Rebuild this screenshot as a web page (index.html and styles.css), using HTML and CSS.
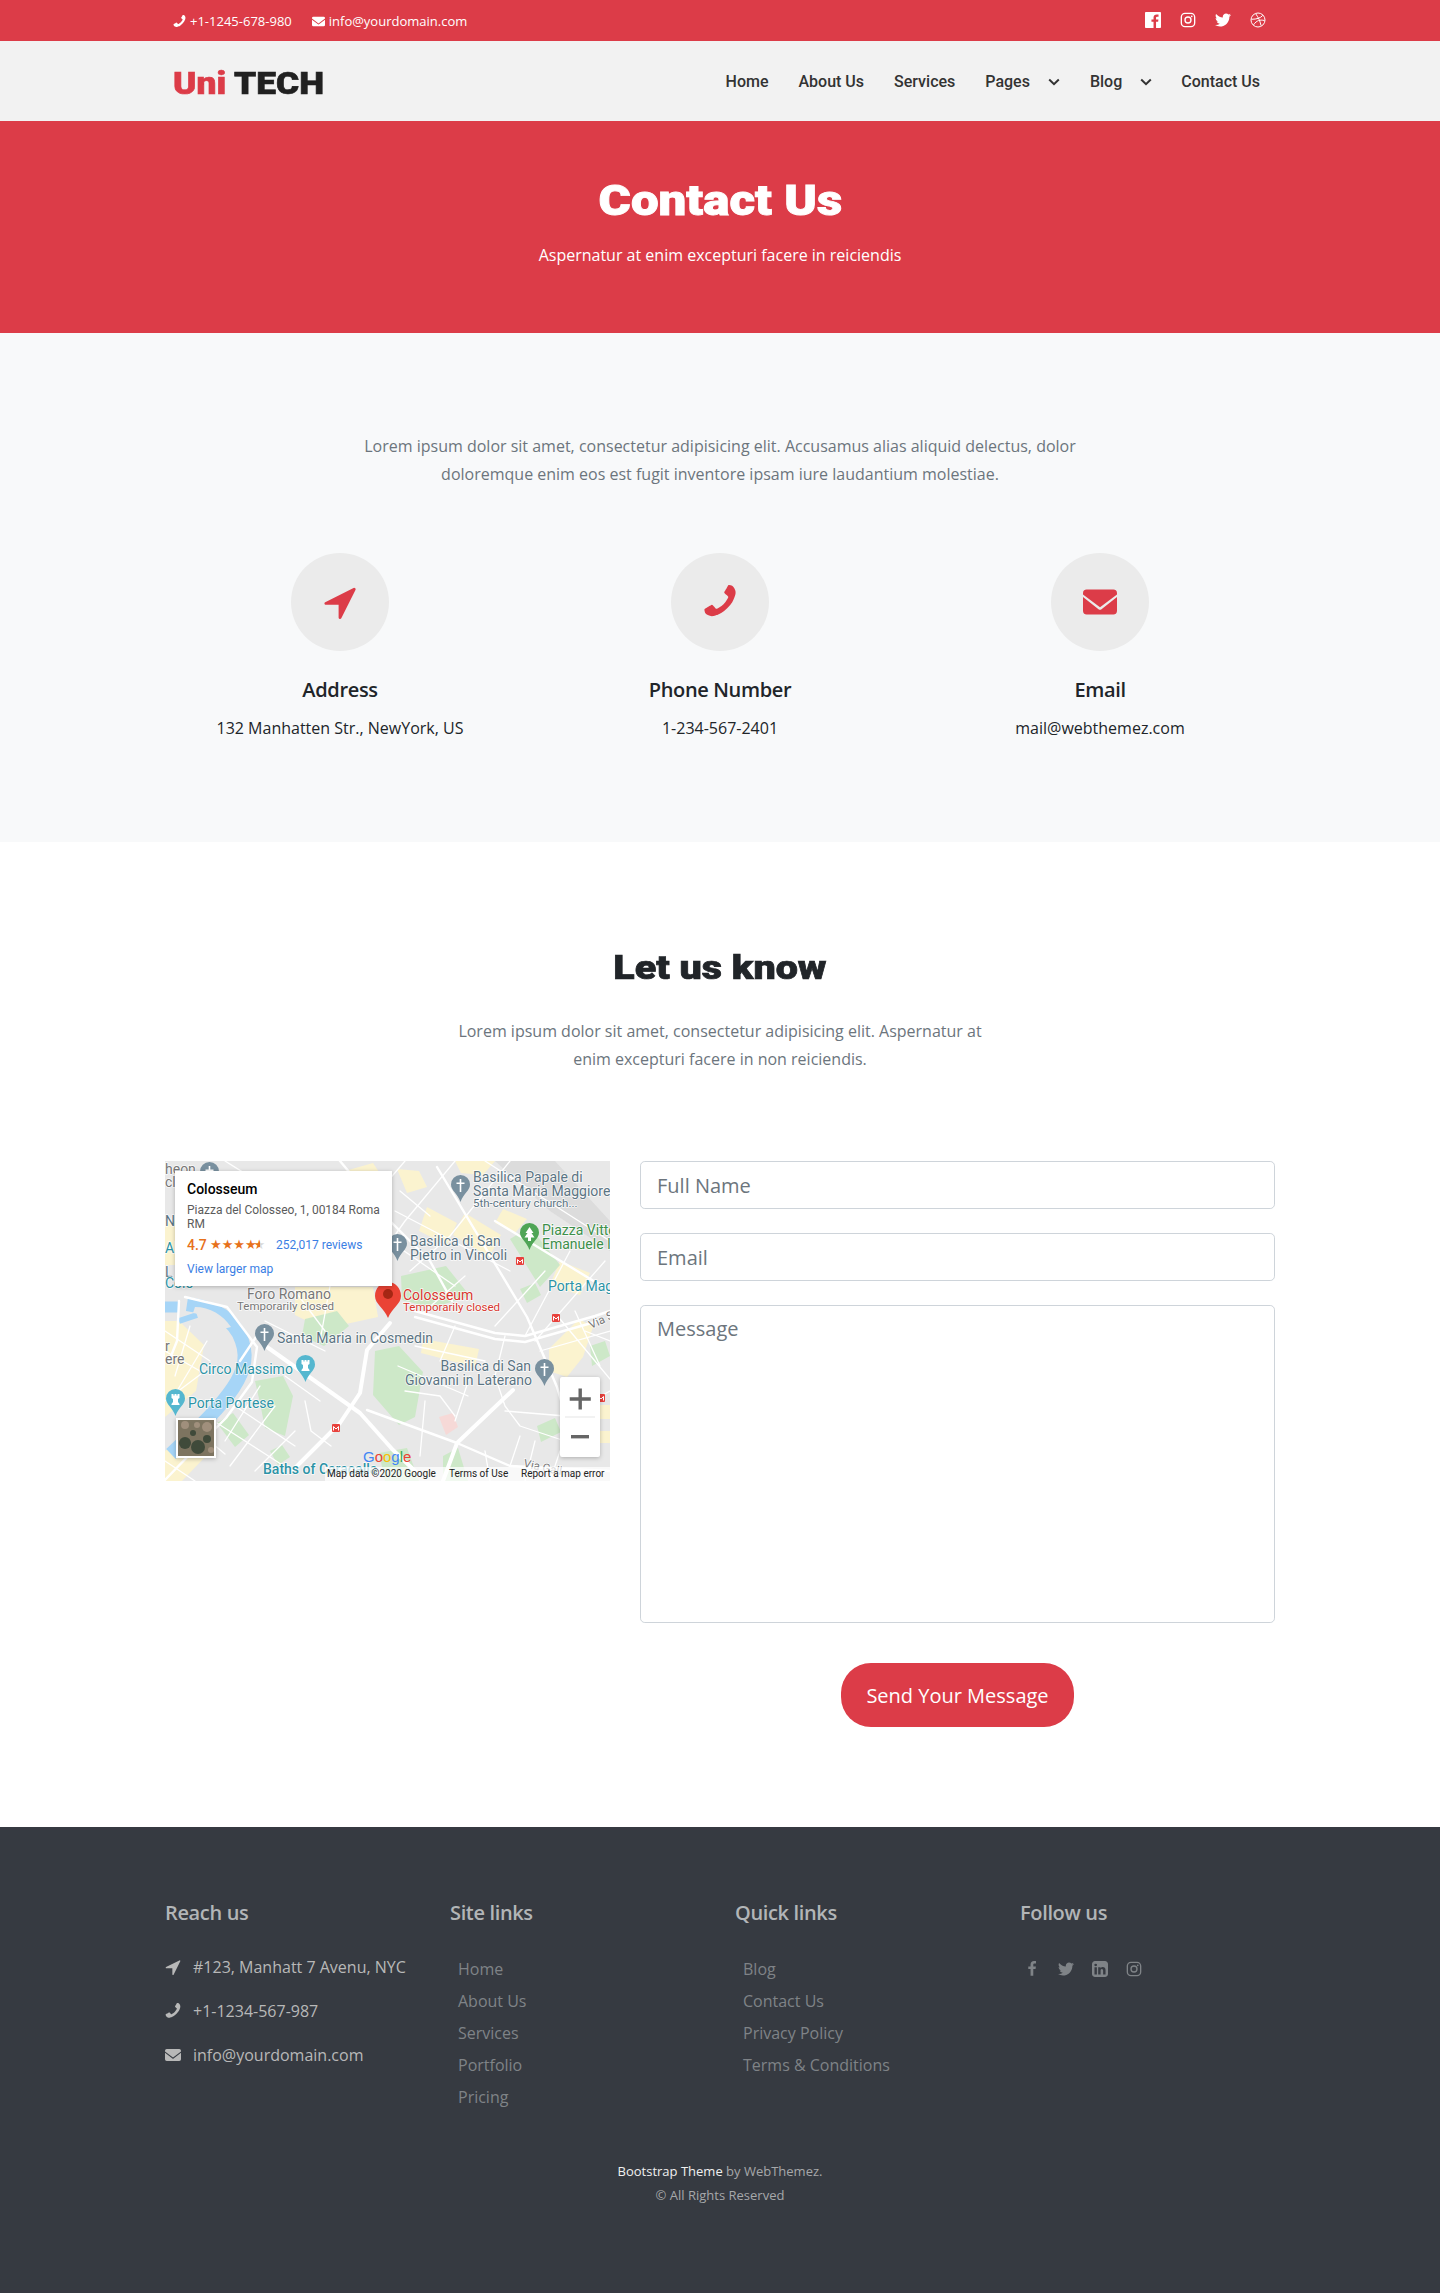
FILE: index.html
```html
<!DOCTYPE html>
<html lang="en">
<head>
<meta charset="utf-8">
<title>Contact Us - UniTech</title>
<link rel="stylesheet" href="styles.css">
</head>
<body>
<svg class="defs" width="0" height="0" aria-hidden="true">
  <defs>
    <symbol id="i-arrow" viewBox="190 128 1410 1536"><path d="M1593 349l-640 1280q-17 35-57 35-5 0-15-2-22-5-35.5-22.5t-13.5-39.5v-576h-576q-22 0-39.5-13.5t-22.5-35.5 4-42 29-30l1280-640q13-7 29-7 27 0 45 19 15 14 18.5 34.5t-6.5 39.5z"/></symbol>
    <symbol id="i-phone" viewBox="192 128 1408 1536"><g transform="matrix(-1 0 0 1 1792 0)"><path d="M1600 1240q0 27-10 70.5t-21 68.5q-21 50-122 106-94 51-186 51-27 0-53-3.5t-57.5-12.5-47-14.5-55.5-20.5-49-18q-98-35-175-83-127-79-264-216t-216-264q-48-77-83-175-3-9-18-49t-20.5-55.5-14.5-47-12.5-57.5-3.5-53q0-92 51-186 56-101 106-122 25-11 68.5-21t70.5-10q14 0 21 3 18 6 53 76 11 19 30 54t35 63.5 31 53.5q3 4 17.5 25t21.5 35.5 7 28.5q0 20-28.5 50t-62 55-62 53-28.5 46q0 9 5 22.5t8.5 20.5 14 24 11.5 19q76 137 174 235t235 174q2 1 19 11.5t24 14 20.5 8.5 22.5 5q18 0 46-28.5t53-62 55-62 50-28.5q14 0 28.5 7t35.5 21.5 25 17.5q25 15 53.5 31t63.5 35 54 30q70 35 76 53 3 7 3 21z"/></g></symbol>
    <symbol id="i-mail" viewBox="0.5 3.5 23 17"><path fill-rule="evenodd" d="M3 3.5h18a2.5 2.5 0 0 1 2.5 2.5v.9L12 15.6.5 6.9V6A2.5 2.5 0 0 1 3 3.5zM.5 8.7 11.2 17a1.3 1.3 0 0 0 1.6 0L23.5 8.7V18a2.5 2.5 0 0 1-2.5 2.5H3A2.5 2.5 0 0 1 .5 18z"/></symbol>
    <symbol id="i-fb-box" viewBox="128 128 1536 1536"><path d="M1579 128q35 0 60 25t25 60v1366q0 35-25 60t-60 25h-391v-595h199l30-232h-229v-148q0-56 23.5-84t91.5-28l122-1v-207q-63-9-178-9-136 0-217.5 80t-81.5 226v171h-200v232h200v595h-735q-35 0-60-25t-25-60v-1366q0-35 25-60t60-25h1366z"/></symbol>
    <symbol id="i-fb" viewBox="448 0 896 1792"><path d="M1343 12v264h-157q-86 0-116 36t-30 108v189h293l-39 296h-254v759h-306v-759h-255v-296h255v-218q0-186 104-288.5t277-102.5q147 0 228 12z"/></symbol>
    <symbol id="i-tw" viewBox="112 256 1572 1280"><path d="M1684 408q-67 98-162 167 1 14 1 42 0 130-38 259.5t-115.5 248.5-184.5 210.5-258 146-323 54.5q-271 0-496-145 35 4 78 4 225 0 401-138-105-2-188-64.5t-114-159.5q33 5 61 5 43 0 85-11-112-23-185.5-111.5t-73.5-205.5v-4q68 38 146 41-66-44-105-115t-39-154q0-88 44-163 121 149 294.5 238.5t371.5 99.5q-8-38-8-74 0-134 94.5-228.5t228.5-94.5q140 0 236 102 109-21 205-78-37 115-142 178 97-10 194-52z"/></symbol>
    <symbol id="i-in" viewBox="128 128 1536 1536"><path d="M365 1414h231v-694h-231v694zm246-908q-1-52-36-86t-93-34-94.5 34-36.5 86q0 51 35.5 85.5t92.5 34.5h1q59 0 95-34.5t36-85.5zm585 908h231v-398q0-154-73-233t-193-79q-136 0-209 117h2v-101h-231q3 66 0 694h231v-388q0-38 7-56 15-35 45-59.5t74-24.5q116 0 116 157v371zm468-998v960q0 119-84.5 203.5t-203.5 84.5h-960q-119 0-203.5-84.5t-84.5-203.5v-960q0-119 84.5-203.5t203.5-84.5h960q119 0 203.5 84.5t84.5 203.5z"/></symbol>
    <symbol id="i-ig" viewBox="0 0 24 24"><g fill="none" stroke="currentColor" stroke-width="2"><rect x="2" y="2" width="20" height="20" rx="5.5"/><circle cx="12" cy="12" r="4.5"/></g><circle cx="17.6" cy="6.4" r="1.3" fill="currentColor"/></symbol>
    <symbol id="i-dr" viewBox="0 0 24 24"><g fill="none" stroke="currentColor" stroke-width="1.5"><circle cx="12" cy="12" r="10.5"/><path d="M8.56 2.75c4.37 6.03 6.02 9.42 8.03 17.72m2.54-15.38c-3.72 4.35-8.94 5.66-16.88 5.85m19.5 1.9c-3.5-.93-6.63-.82-8.94 0-2.58.92-5.01 2.86-7.44 6.32"/></g></symbol>
    <symbol id="i-chev" viewBox="0 0 12 8"><path d="M1.2 1.5 6 6.2l4.8-4.7" fill="none" stroke="currentColor" stroke-width="2"/></symbol>
    <path id="pin" d="M9.5 0a9.5 9.5 0 0 1 9.5 9.5c0 6-6.5 9-9.5 17.5C6.5 18.5 0 15.5 0 9.5A9.5 9.5 0 0 1 9.5 0z"/>
    <path id="cross" d="M8.7 4h1.600v3.500h3.200v1.600h-3.200V17H8.700V9.100H5.500V7.500h3.200z" fill="#fff"/>
    <path id="tower" d="M5.5 5h2v1.5h1V5h2v1.5h1V5h2v4l-1.5 1v3l1.5 2v1h-8v-1l1.5-2v-3l-1.5-1z" fill="#fff"/>
    <g id="metro"><rect width="8" height="8" rx="1" fill="#e8413c"/><path d="M1.5 6.5v-4L4 5l2.500-2.500v4" fill="none" stroke="#fff" stroke-width="1"/></g>
    <linearGradient id="half-star"><stop offset=".55" stop-color="#e7711b"/><stop offset=".55" stop-color="#d8d8d8"/></linearGradient>
  </defs>
</svg>

<header class="topbar">
  <div class="wrap topbar-row">
    <div class="contact-mini">
      <span class="mini-item"><svg class="ico-13"><use href="#i-phone"/></svg>+1-1245-678-980</span>
      <span class="mini-item"><svg class="ico-13"><use href="#i-mail"/></svg>info@yourdomain.com</span>
    </div>
    <div class="top-social">
      <svg class="ico-top"><use href="#i-fb-box"/></svg>
      <svg class="ico-top"><use href="#i-ig"/></svg>
      <svg class="ico-top"><use href="#i-tw"/></svg>
      <svg class="ico-top"><use href="#i-dr"/></svg>
    </div>
  </div>
</header>

<nav class="navbar">
  <div class="wrap nav-row">
    <a class="logo"><span class="logo-red">Uni</span> TECH</a>
    <ul class="menu">
      <li>Home</li>
      <li>About Us</li>
      <li>Services</li>
      <li class="has-sub">Pages<svg class="chev"><use href="#i-chev"/></svg></li>
      <li class="has-sub has-sub-last">Blog<svg class="chev"><use href="#i-chev"/></svg></li>
      <li>Contact Us</li>
    </ul>
  </div>
</nav>

<section class="hero">
  <h1>Contact Us</h1>
  <p>Aspernatur at enim excepturi facere in reiciendis</p>
</section>

<section class="info">
  <p class="info-lead">Lorem ipsum dolor sit amet, consectetur adipisicing elit. Accusamus alias aliquid delectus, dolor doloremque enim eos est fugit inventore ipsam iure laudantium molestiae.</p>
  <div class="info-grid">
    <div class="info-card">
      <div class="circle"><svg class="ico-circle"><use href="#i-arrow"/></svg></div>
      <h3>Address</h3>
      <p>132 Manhatten Str., NewYork, US</p>
    </div>
    <div class="info-card">
      <div class="circle"><svg class="ico-circle"><use href="#i-phone"/></svg></div>
      <h3>Phone Number</h3>
      <p>1-234-567-2401</p>
    </div>
    <div class="info-card">
      <div class="circle"><svg class="ico-circle"><use href="#i-mail"/></svg></div>
      <h3>Email</h3>
      <p>mail@webthemez.com</p>
    </div>
  </div>
</section>

<section class="know">
  <h2>Let us know</h2>
  <p class="know-lead">Lorem ipsum dolor sit amet, consectetur adipisicing elit. Aspernatur at enim excepturi facere in non reiciendis.</p>
  <div class="know-row">
    <div class="map">
      <svg class="map-svg" width="445" height="320" viewBox="0 0 445 320">
        <rect width="445" height="320" fill="#e8e8e8"/>
        <!-- residential blocks -->
        <g fill="#fbf3cf">
          <path d="M232 8l22 2 8 16-20 6z"/>
          <path d="M262 46l30 16-10 22-28-14z"/>
          <path d="M300 52l36 22-12 22-36-22z"/>
          <path d="M338 48l24 10-12 14-20-10z"/>
          <path d="M180 10l28-8 12 18-24 14z"/>
          <path d="M290 0h40l-12 14-22-2z"/>
          <path d="M395 100l30 12-10 22-30-10z"/>
          <path d="M130 126h78l5 30-55 12-28-14z"/>
          <path d="M0 160h14l25 24-8 46-31 26z"/>
          <path d="M0 290l22-20 20 24-25 26H0z"/>
          <path d="M258 178l56 10-4 18-54-14z"/>
          <path d="M384 188l30-30 14 8-10 30-16 20-18-6z"/>
          <path d="M418 244h27v14h-27zM418 270h27v12h-27z"/>
          <path d="M0 60h18v44H0z"/>
        </g>
        <!-- parks -->
        <g fill="#cde8c8">
          <path d="M236 115l45-10 24 30-38 12-30-8z"/>
          <path d="M345 78l20-12 30 38-20 22z"/>
          <path d="M140 158l32-8 12 15-25 20-22-10z"/>
          <path d="M90 220l28-5 10 20-8 40-20-8-5-25z"/>
          <path d="M52 262l16-10 16 22-14 12z"/>
          <path d="M210 190l24-5 24 26-8 45-16 8-26-30z"/>
          <path d="M372 265l18-8 6 14-20 10z"/>
          <path d="M278 295l15-8 10 33h-25z"/>
          <path d="M355 128l15-6 6 12-14 8z"/>
          <path d="M425 185l15-5 5 15-18 10z"/>
          <path d="M105 290l12-6 8 12-12 8z"/>
          <path d="M214 292l28-5 12 33h-34z"/>
        </g>
        <path d="M274 256l14-4 5 14-12 8z" fill="#f6d9d7"/>
        <!-- river -->
        <g fill="none" stroke="#a6d5f7">
          <path d="M0 146h14" stroke-width="11"/>
          <path d="M22 143c20 3 40 8 52 30 10 20 6 36-6 54-12 18-30 36-62 66" stroke-width="14"/>
          <path d="M14 160l18-6" stroke-width="6"/>
        </g>
        <path d="M30 146c15 0 28 8 36 20l-8 2c-10-10-18-14-30-16z" fill="#e8e8e8"/>
        <!-- rail zone -->
        <path d="M330 0h60l55 60v30l-60-40z" fill="#dcdcdc"/>
        <!-- roads -->
        <g fill="none" stroke="#fff" stroke-linecap="round" stroke-linejoin="round">
          <g stroke-width="4">
            <path d="M102 186l93 66 33 37 22 21"/>
            <path d="M225 162l-23 27-7 43-20 30-47 47"/>
            <path d="M348 229l-56 53-14 38"/>
          </g>
          <g stroke-width="2.4">
            <path d="M250 150l80 22 30 3 70-20 15-5"/>
            <path d="M250 156l80 22 30 3 70-20"/>
            <path d="M292 282l53 23 100 5"/>
            <path d="M292 282l-90-33"/>
            <path d="M20 136l42 10 30 40-5 35-26 36-30 30-31 32"/>
            <path d="M14 140l-2 40-8 20"/>
            <path d="M175 0l50 60 40 40 22 40"/>
            <path d="M272 6l90 150 30 70 15 50"/>
            <path d="M330 60l115 70"/>
            <path d="M75 200l20-30"/>
          </g>
          <g stroke-width="1.3">
            <path d="M240 0l-30 35-30 30"/><path d="M290 0l-50 60-25 35"/><path d="M345 0l-60 75-40 35"/>
            <path d="M320 0l125 80"/><path d="M230 50l115 60"/><path d="M210 70l80 55"/>
            <path d="M300 115l-40 35"/><path d="M380 110l-50 55"/><path d="M405 90l-45 85"/>
            <path d="M440 100l-70 80"/><path d="M445 170l-70 20"/><path d="M395 158l50 60"/>
            <path d="M410 150l25 55"/><path d="M420 170l25 10"/><path d="M340 175l-10 40"/>
            <path d="M290 165l-15 35"/><path d="M250 185l70 15"/><path d="M233 205l70 30"/>
            <path d="M260 240l-5 55"/><path d="M305 215l-15 45"/><path d="M240 230l35 5 15 20"/>
            <path d="M330 215l10 30 15 20 60 20"/><path d="M340 250l60 5 45-25"/><path d="M370 280l-10 40"/>
            <path d="M345 305l10-30"/><path d="M320 290l5 30"/><path d="M395 290l-10 30"/>
            <path d="M70 245l60 40"/><path d="M52 262l70 45"/><path d="M95 225l-35 55"/><path d="M110 245l-45 60"/>
            <path d="M130 270l-40 40"/><path d="M140 240l6 30 20 15"/><path d="M120 215l35 25"/>
            <path d="M0 170l45 30"/><path d="M0 190l35 20"/><path d="M25 165l-15 50"/><path d="M42 180l-30 50"/>
            <path d="M0 240l40-30"/><path d="M0 300l30 20"/><path d="M30 268l30 25"/><path d="M20 295l25-20"/>
            <path d="M60 0l40 25"/><path d="M235 30l30 25"/><path d="M130 130l30 40"/><path d="M165 125l-10 55"/>
            <path d="M100 160l60 30"/>
          </g>
        </g>
        <text x="0" y="13" class="mt mt-grey">heon</text>
        <text x="0" y="26" class="mt mt-grey">cl</text>
        <use href="#pin" x="35" y="1" fill="#79909f"/>
        <use href="#cross" x="35" y="1"/>
        <text x="0" y="65" class="mt mt-slate">N</text>
        <text x="0" y="92" class="mt mt-teal">Alt</text>
        <text x="0" y="116" class="mt mt-slate">L</text>
        <text x="0" y="127" class="mt mt-teal">Colo</text>
        <text x="0" y="190" class="mt mt-grey">r</text>
        <text x="0" y="203" class="mt mt-grey">ere</text>

        <use href="#pin" x="286" y="14" fill="#79909f"/><use href="#cross" x="286" y="14"/>
        <text x="308" y="21" class="mt mt-slate">Basilica Papale di</text>
        <text x="308" y="35" class="mt mt-slate">Santa Maria Maggiore</text>
        <text x="308" y="46" class="mt-sub mt-slate">5th-century church...</text>

        <use href="#pin" x="223" y="73" fill="#79909f"/><use href="#cross" x="223" y="73"/>
        <text x="245" y="85" class="mt mt-slate">Basilica di San</text>
        <text x="245" y="99" class="mt mt-slate">Pietro in Vincoli</text>

        <use href="#pin" x="355" y="62" fill="#4fa556"/>
        <path d="M364.5 66l4 6h-2l3 4.5h-3.5V80h-3v-3.5h-3.5l3-4.5h-2z" fill="#fff"/>
        <text x="377" y="74" class="mt mt-green">Piazza Vittorio</text>
        <text x="377" y="88" class="mt mt-green">Emanuele II</text>

        <text x="383" y="130" class="mt mt-teal">Porta Maggiore</text>
        <text x="82" y="138" class="mt mt-grey">Foro Romano</text>
        <text x="72" y="149" class="mt-sub mt-grey">Temporarily closed</text>

        <text x="238" y="139" class="mt mt-red">Colosseum</text>
        <text x="238" y="150" class="mt-sub mt-red">Temporarily closed</text>

        <use href="#pin" x="90" y="163" fill="#79909f"/><use href="#cross" x="90" y="163"/>
        <text x="112" y="182" class="mt mt-slate">Santa Maria in Cosmedin</text>

        <text x="34" y="213" class="mt mt-teal">Circo Massimo</text>
        <use href="#pin" x="131" y="194" fill="#55b7cf"/><use href="#tower" x="131" y="194"/>

        <use href="#pin" x="1" y="228" fill="#55b7cf"/><use href="#tower" x="1" y="228"/>
        <text x="23" y="247" class="mt mt-teal">Porta Portese</text>

        <use href="#pin" x="370" y="198" fill="#79909f"/><use href="#cross" x="370" y="198"/>
        <text x="366" y="210" text-anchor="end" class="mt mt-slate">Basilica di San</text>
        <text x="367" y="224" text-anchor="end" class="mt mt-slate">Giovanni in Laterano</text>

        <text x="98" y="313" class="mt mt-teal mt-strong">Baths of Caracalla</text>
        <text transform="translate(426 168) rotate(-25)" class="mt-sub mt-grey">Via S</text>
        <text transform="translate(358 306) rotate(12)" class="mt-sub mt-grey">Via Gall</text>

        <use href="#metro" x="351" y="96"/>
        <use href="#metro" x="387" y="153"/>
        <use href="#metro" x="167" y="263"/>
        <use href="#metro" x="432" y="233"/>

        <!-- marker -->
        <path d="M223 121c7 0 13 6 13 14 0 8-9 12-13 22-4-10-13-14-13-22 0-8 6-14 13-14z" fill="#ea4335"/>
        <circle cx="223" cy="133" r="5" fill="#a52714"/>

        <!-- info window -->
        <rect x="10" y="10" width="217" height="115" fill="#fff" class="map-card"/>
        <text x="22" y="33" class="iw-title">Colosseum</text>
        <text x="22" y="53" class="iw-text">Piazza del Colosseo, 1, 00184 Roma</text>
        <text x="22" y="67" class="iw-text">RM</text>
        <text x="22" y="89" class="iw-rate">4.7</text>
        <text x="45" y="88" class="iw-stars">★★★★</text>
        <text x="88.5" y="88" class="iw-stars iw-half">★</text>
        <text x="111" y="88" class="iw-link">252,017 reviews</text>
        <text x="22" y="112" class="iw-link">View larger map</text>

        <!-- zoom control -->
        <rect x="395" y="216" width="40" height="80" rx="2" fill="#fff" class="map-card"/>
        <rect x="400" y="255.5" width="30" height="1" fill="#e6e6e6"/>
        <path d="M413.5 227.5h3.4v8.8h8.9v3.4h-8.9v8.8h-3.4v-8.8h-8.8v-3.4h8.8z" fill="#666"/>
        <rect x="406" y="274" width="18" height="3.4" fill="#666"/>

        <!-- satellite thumb -->
        <rect x="11" y="257" width="40" height="40" fill="#fff" class="map-card"/>
        <rect x="13" y="259" width="36" height="36" fill="#7d7460"/>
        <g fill="#3f4a3a">
          <circle cx="20" cy="282" r="6"/><circle cx="33" cy="286" r="7"/><circle cx="42" cy="278" r="4"/><circle cx="28" cy="272" r="3"/>
        </g>
        <g fill="#a08f7c">
          <circle cx="42" cy="266" r="5"/><circle cx="20" cy="264" r="4"/><circle cx="32" cy="264" r="3"/><circle cx="46" cy="289" r="3"/>
        </g>

        <!-- footer strip -->
        <text x="198" y="301" class="g-logo"><tspan fill="#4285f4">G</tspan><tspan fill="#ea4335">o</tspan><tspan fill="#fbbc05">o</tspan><tspan fill="#4285f4">g</tspan><tspan fill="#34a853">l</tspan><tspan fill="#ea4335">e</tspan></text>
        <rect x="160" y="306" width="285" height="14" fill="#fff" opacity=".72"/>
        <text x="162" y="316" class="m-foot">Map data ©2020 Google</text>
        <text x="284" y="316" class="m-foot">Terms of Use</text>
        <text x="356" y="316" class="m-foot">Report a map error</text>
      </svg>
    </div>
    <form class="contact-form">
      <input class="field" type="text" placeholder="Full Name">
      <input class="field" type="text" placeholder="Email">
      <textarea class="field field-area" placeholder="Message"></textarea>
      <div class="form-action"><button class="send" type="button">Send Your Message</button></div>
    </form>
  </div>
</section>

<footer class="footer">
  <div class="foot-grid">
    <div>
      <h4>Reach us</h4>
      <ul class="reach">
        <li><svg class="ico-16"><use href="#i-arrow"/></svg>#123, Manhatt 7 Avenu, NYC</li>
        <li><svg class="ico-16"><use href="#i-phone"/></svg>+1-1234-567-987</li>
        <li><svg class="ico-16"><use href="#i-mail"/></svg>info@yourdomain.com</li>
      </ul>
    </div>
    <div>
      <h4>Site links</h4>
      <ul class="links">
        <li>Home</li><li>About Us</li><li>Services</li><li>Portfolio</li><li>Pricing</li>
      </ul>
    </div>
    <div>
      <h4>Quick links</h4>
      <ul class="links">
        <li>Blog</li><li>Contact Us</li><li>Privacy Policy</li><li>Terms &amp; Conditions</li>
      </ul>
    </div>
    <div>
      <h4>Follow us</h4>
      <div class="follow">
        <svg class="ico-16"><use href="#i-fb"/></svg>
        <svg class="ico-16"><use href="#i-tw"/></svg>
        <svg class="ico-16"><use href="#i-in"/></svg>
        <svg class="ico-16"><use href="#i-ig"/></svg>
      </div>
    </div>
  </div>
  <div class="copy">
    <p><span class="copy-strong">Bootstrap Theme</span> by WebThemez.</p>
    <p>© All Rights Reserved</p>
  </div>
</footer>
</body>
</html>
```

FILE: styles.css
```css
* { box-sizing: border-box; }
html, body { margin: 0; padding: 0; }
body { font-family: "Open Sans", sans-serif; font-size: 16px; line-height: 24px; color: #212529; background: #fff; }
h1, h2, h3, h4, p, ul { margin: 0; padding: 0; }
ul { list-style: none; }
svg { display: block; fill: currentColor; flex: none; }
.defs { position: absolute; }
.wrap { width: 1140px; margin: 0 auto; }

.topbar { height: 41px; background: #dc3c48; color: #fff; }
.topbar-row { height: 41px; display: flex; justify-content: space-between; align-items: center; padding: 1px 24px 0 23px; font-size: 13px; }
.contact-mini { display: flex; gap: 20px; }
.mini-item { display: flex; align-items: center; gap: 4px; }
.ico-13 { width: 13px; height: 13px; }
.top-social { display: flex; gap: 19px; margin-top: -3px; }
.ico-top { width: 16px; height: 16px; }

.navbar { height: 80px; background: #f2f2f2; }
.nav-row { height: 80px; display: flex; justify-content: space-between; align-items: center; padding: 0 30px 0 23px; }
.logo { font-family: Roboto, sans-serif; font-weight: 900; font-size: 31px; line-height: 36px; color: #212121; margin-top: 5px; -webkit-text-stroke: .6px currentColor; transform: scaleX(1.14); transform-origin: left center; }
.logo-red { color: #dc3c48; }
.menu { display: flex; gap: 30px; margin-top: 1px; font-family: Roboto, sans-serif; font-weight: 500; font-size: 16px; color: #333; }
.has-sub { display: flex; align-items: center; gap: 18px; }
.has-sub-last { margin-right: -1px; }
.chev { width: 12px; height: 8px; }

.hero { height: 212px; background: #dc3c48; color: #fff; text-align: center; padding-top: 55px; }
.hero h1 { width: fit-content; margin: 0 auto; font-family: Roboto, sans-serif; font-weight: 900; font-size: 43px; line-height: 48px; -webkit-text-stroke: .9px currentColor; transform: scaleX(1.145); }
.hero p { margin-top: 19px; }

.info { height: 509px; background: #f8f9fa; padding-top: 99px; text-align: center; }
.info-lead { width: 730px; margin: 0 auto; line-height: 28px; color: #6c757d; }
.info-grid { width: 1140px; margin: 65px auto 0; display: grid; grid-template-columns: repeat(3, 1fr); }
.info-card { display: flex; flex-direction: column; align-items: center; }
.circle { width: 98px; height: 98px; border-radius: 50%; background: #ebebeb; color: #dc3c48; display: flex; align-items: center; justify-content: center; }
.ico-circle { width: 34px; height: 34px; }
.info-card h3 { font-size: 20px; font-weight: 600; letter-spacing: -.35px; line-height: 24px; margin-top: 27px; color: #212529; }
.info-card p { margin-top: 14px; }

.know { height: 985px; padding-top: 106px; text-align: center; }
.know h2 { width: fit-content; margin: 0 auto; font-family: Roboto, sans-serif; font-weight: 900; font-size: 34px; line-height: 38px; color: #212529; -webkit-text-stroke: .7px currentColor; transform: scaleX(1.16); }
.know-lead { width: 540px; margin: 31px auto 0; line-height: 28px; color: #6c757d; }
.know-row { width: 1110px; margin: 88px auto 0; display: flex; gap: 30px; align-items: flex-start; }
.map { width: 445px; height: 320px; flex: none; }
.map-svg { width: 445px; height: 320px; }
.contact-form { flex: 1; display: flex; flex-direction: column; gap: 24px; }
.field { display: block; width: 100%; height: 48px; padding: 8px 16px; border: 1px solid #ced4da; border-radius: 4.8px; font-family: inherit; font-size: 20px; line-height: 30px; color: #495057; background: #fff; outline: none; resize: none; }
.field::placeholder { color: #6c757d; opacity: 1; }
.field-area { height: 318px; }
.form-action { display: flex; justify-content: center; margin-top: 16px; }
.send { height: 64px; width: 233px; border: 0; border-radius: 30px; background: #dc3c48; color: #fff; font-family: inherit; font-size: 20px; padding: 0; }

.mt { font: 400 14px Roboto, sans-serif; paint-order: stroke; stroke: #fff; stroke-width: 1.5px; stroke-opacity: .85; }
.mt-sub { font: 400 11.5px Roboto, sans-serif; paint-order: stroke; stroke: #fff; stroke-width: 1.5px; stroke-opacity: .85; }
.mt-strong { font-weight: 500; }
.mt-slate { fill: #5b7483; }
.mt-grey { fill: #777; }
.mt-teal { fill: #2c93a6; }
.mt-green { fill: #3d8f4a; }
.mt-red { fill: #d8362e; }
.map-card { filter: drop-shadow(0 1px 2px rgba(0,0,0,.25)); }
.iw-title { font: 500 14px Roboto, sans-serif; fill: #000; }
.iw-text { font: 400 12px Roboto, sans-serif; fill: #5b5b5b; }
.iw-rate { font: 500 14px Roboto, sans-serif; fill: #e7711b; }
.iw-stars { font: 400 13px "DejaVu Sans", sans-serif; fill: #e7711b; }
.iw-half { fill: url(#half-star); }
.iw-link { font: 400 12px Roboto, sans-serif; fill: #3a7ee4; }
.g-logo { font: 400 15px "Liberation Sans", sans-serif; }
.m-foot { font: 400 10px Roboto, sans-serif; fill: #222; }

.footer { height: 466px; background: #363a41; padding-top: 74px; }
.foot-grid { width: 1140px; padding: 0 15px; margin: 0 auto; height: 258px; display: grid; grid-template-columns: repeat(4, 285px); }
.footer h4 { font-size: 20px; line-height: 24px; font-weight: 600; letter-spacing: -.35px; color: #b2b5b7; }
.reach { margin-top: 30px; display: flex; flex-direction: column; gap: 20px; color: #b8b8b8; }
.reach li { display: flex; align-items: center; gap: 12px; }
.ico-16 { width: 16px; height: 16px; }
.links { margin-top: 32px; padding-left: 8px; display: flex; flex-direction: column; gap: 8px; color: #7f8387; }
.follow { margin-top: 36px; padding-left: 4px; display: flex; gap: 18px; color: #7f8387; }
.copy { text-align: center; font-size: 13px; color: #a6a8aa; }
.copy-strong { color: #f0f0f0; }
```
